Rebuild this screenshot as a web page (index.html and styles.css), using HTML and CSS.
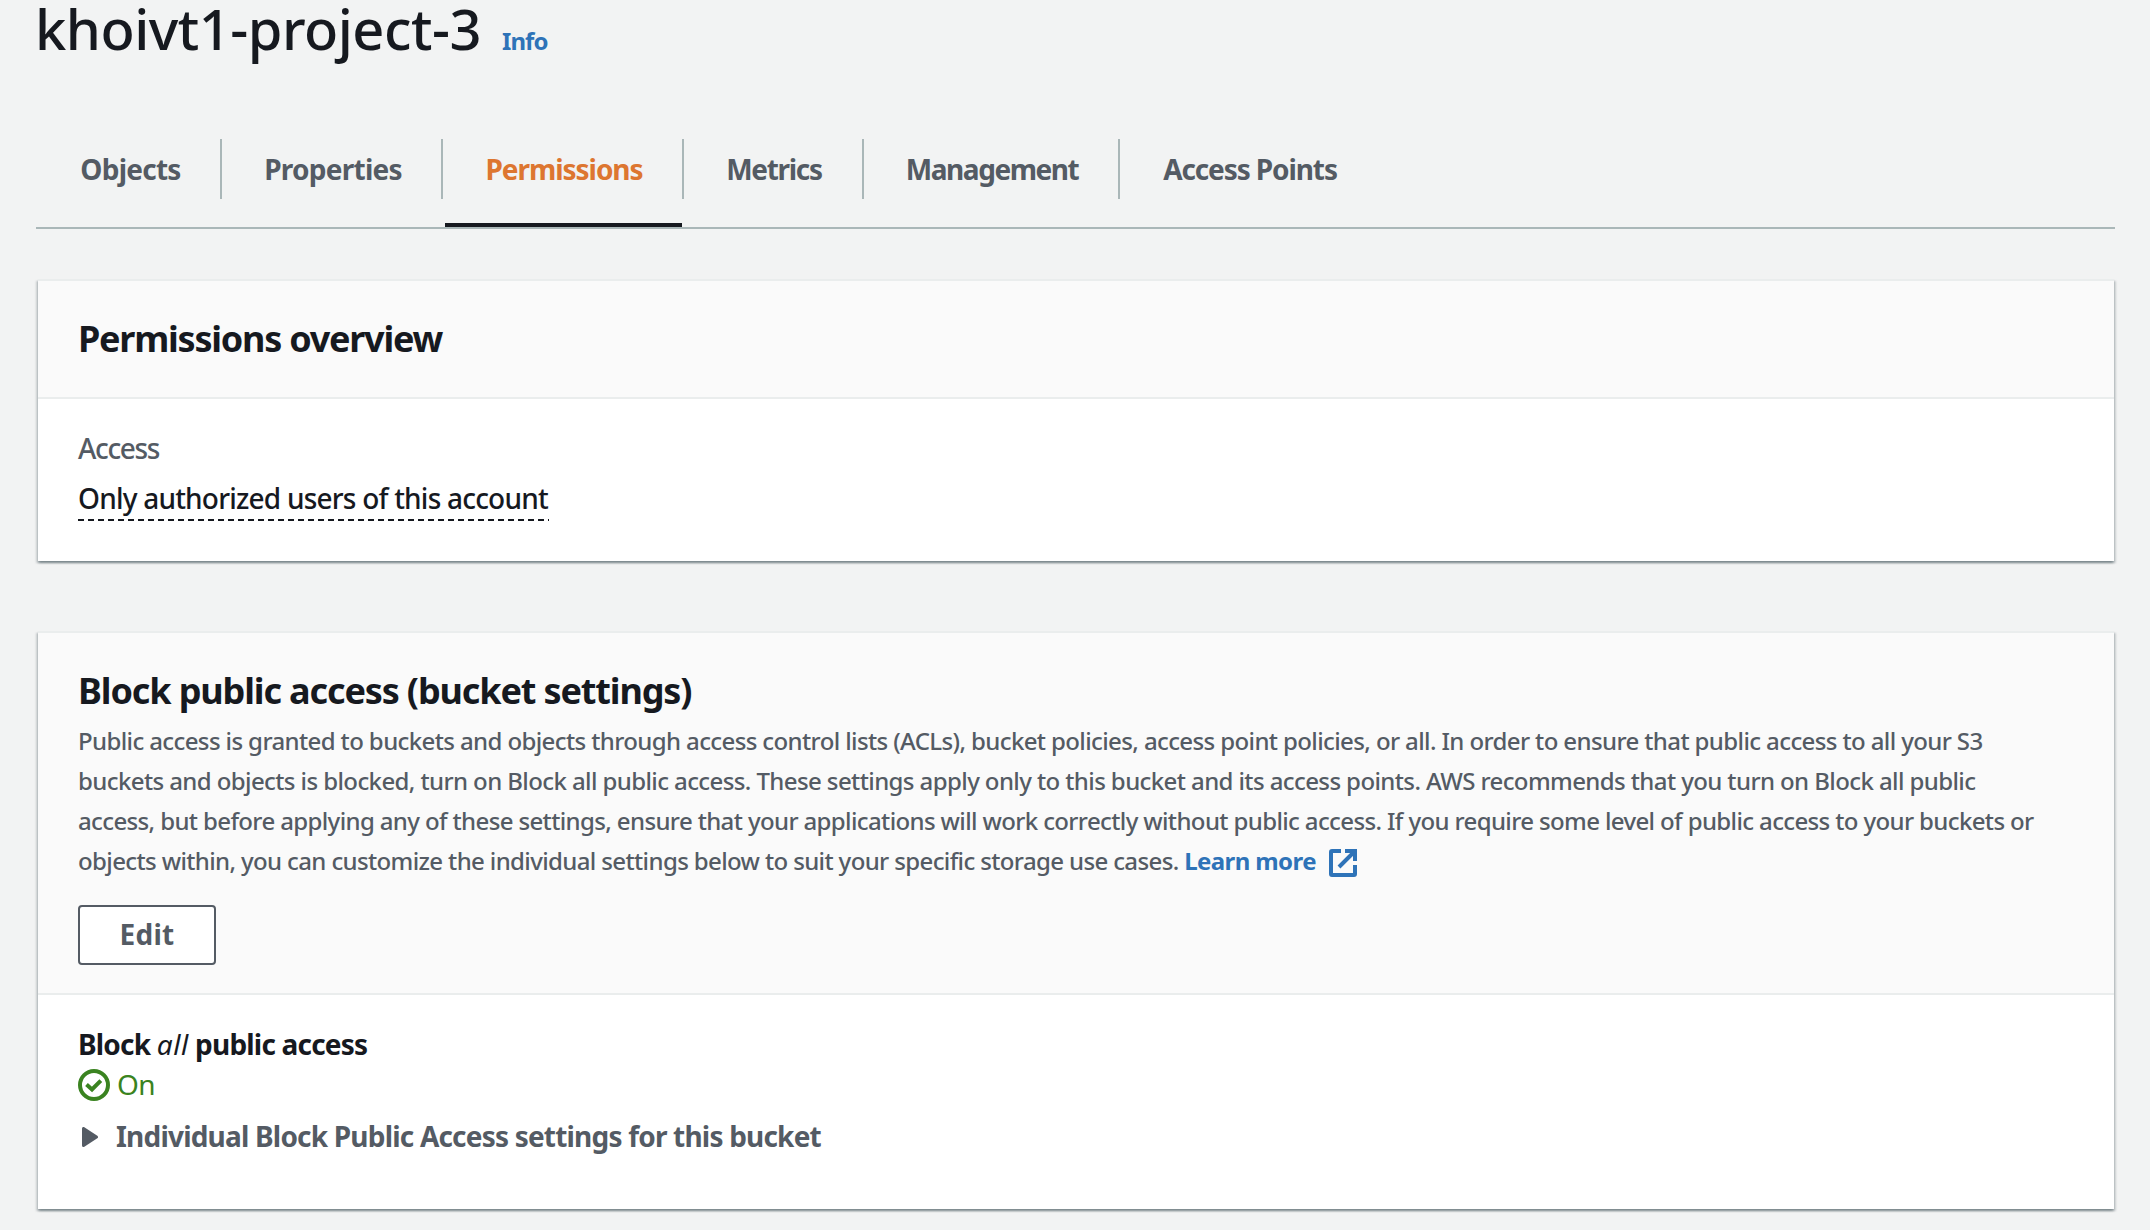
FILE: index.html
```
<!DOCTYPE html>
<html lang="en">
<head>
<meta charset="utf-8">
<title>khoivt1-project-3</title>
<link rel="stylesheet" href="styles.css">
</head>
<body>
<header class="page-header">
  <h1 class="page-title">khoivt1-project-3</h1>
  <a class="info-link">Info</a>
</header>
<nav class="tabs">
  <a class="tab tab-objects"><span>Objects</span></a>
  <a class="tab tab-properties"><span>Properties</span></a>
  <a class="tab tab-permissions active"><span>Permissions</span></a>
  <a class="tab tab-metrics"><span>Metrics</span></a>
  <a class="tab tab-management"><span>Management</span></a>
  <a class="tab tab-points"><span>Access Points</span></a>
</nav>
<main class="content">
  <section class="card">
    <div class="card-header">
      <h2 class="card-title overview-title">Permissions overview</h2>
    </div>
    <div class="card-body overview-body">
      <div class="label">Access</div>
      <div class="access-value">Only authorized users of this account</div>
    </div>
  </section>
  <section class="card">
    <div class="card-header settings-header">
      <h2 class="card-title">Block public access (bucket settings)</h2>
      <p class="description">
        <span class="l1">Public access is granted to buckets and objects through access control lists (ACLs), bucket policies, access point policies, or all. In order to ensure that public access to all your S3</span><br>
        <span class="l2">buckets and objects is blocked, turn on Block all public access. These settings apply only to this bucket and its access points. AWS recommends that you turn on Block all public</span><br>
        <span class="l3">access, but before applying any of these settings, ensure that your applications will work correctly without public access. If you require some level of public access to your buckets or</span><br>
        <span class="l4">objects within, you can customize the individual settings below to suit your specific storage use cases.</span>
        <a class="learn-more">Learn more<svg class="external" viewBox="0 0 28 28"><path d="M12 2H3Q2 2 2 3v22q0 1 1 1h22q1 0 1-1v-9M16 2h10v10M25.500 2.500 10 18"/></svg></a>
      </p>
      <button class="edit-button">Edit</button>
    </div>
    <div class="card-body settings-body">
      <div class="setting-name">Block <em>all</em> public access</div>
      <div class="status"><svg class="status-icon" viewBox="0 0 32 32"><circle cx="16" cy="16" r="14"/><path d="M8.500 15.500 14 20.500 22.800 11.700"/></svg><span>On</span></div>
      <div class="expander"><svg class="caret" viewBox="0 0 16 20"><path d="M1.500 1.500v17L14.500 10z"/></svg><span>Individual Block Public Access settings for this bucket</span></div>
    </div>
  </section>
</main>
</body>
</html>
```
FILE: styles.css
```
* { box-sizing: border-box; }
body {
  margin: 0;
  height: 1230px;
  overflow: hidden;
  background: #f2f3f3;
  color: #16191f;
  font: 400 28px/40px "Noto Sans", "Open Sans", sans-serif;
}
.page-header {
  display: flex;
  align-items: baseline;
  gap: 21px;
  height: 139px;
  padding-left: 35px;
}
.page-title {
  margin: 0;
  font-size: 56px;
  line-height: 56px;
  font-weight: 500;
  letter-spacing: -0.5px;
}
.info-link {
  color: #2e73b8;
  font-size: 24px;
  font-weight: 700;
  letter-spacing: -0.9px;
}
.tabs {
  display: flex;
  height: 90px;
  margin: 0 35px 0 36px;
  padding-left: 2px;
  border-bottom: 2px solid #aab7b8;
}
.tab {
  display: flex;
  justify-content: center;
  height: 60px;
  padding-left: 3px;
  border-right: 2px solid #aab7b8;
  color: #545b64;
  font-weight: 700;
  line-height: 60px;
}
.tab-objects { width: 184px; letter-spacing: -0.75px; }
.tab-properties { width: 221px; letter-spacing: -0.75px; }
.tab-permissions { width: 241px; letter-spacing: -1.05px; }
.tab-metrics { width: 180px; padding-left: 2px; letter-spacing: -1.3px; }
.tab-management { width: 256px; padding-left: 2px; letter-spacing: -1.45px; }
.tab-points { width: 257px; letter-spacing: -1.1px; border-right: 0; }
.tab.active { position: relative; color: #dd7630; }
.tab.active::after {
  content: "";
  position: absolute;
  left: 2px;
  right: 0;
  top: 84px;
  height: 4px;
  background: #16191f;
}
.content {
  display: flex;
  flex-direction: column;
  gap: 70px;
  padding: 50px 36px 0 38px;
}
.card {
  border-top: 2px solid #eaeded;
  background: #fff;
  box-shadow: 0 2px 2px rgba(0, 28, 36, .3), 2px 2px 2px rgba(0, 28, 36, .15), -2px 2px 2px rgba(0, 28, 36, .15);
}
.card-header {
  padding: 36px 40px 36px;
  border-bottom: 2px solid #eaeded;
  background: #fafafa;
}
.settings-header { padding-bottom: 28px; }
.card-title {
  margin: 0;
  font-size: 36px;
  line-height: 44px;
  font-weight: 700;
  letter-spacing: -1.13px;
}
.overview-title { letter-spacing: -1.24px; }
.overview-body { padding: 29px 40px 40px; font-weight: 500; }
.label { margin-bottom: 10px; color: #545b64; letter-spacing: -1.35px; }
.access-value {
  width: 471px;
  height: 43px;
  white-space: nowrap;
  letter-spacing: -0.79px;
  background: repeating-linear-gradient(90deg, #16191f 0 6px, transparent 6px 10px) 0 41px / 100% 2px no-repeat;
}
.description {
  margin: 8px 0 24px;
  color: #545b64;
  font-size: 24px;
  font-weight: 500;
  white-space: nowrap;
  letter-spacing: -0.63px;
}
.l1 { letter-spacing: -0.615px; }
.l2 { letter-spacing: -0.6px; }
.learn-more {
  color: #2e73b8;
  font-weight: 700;
  letter-spacing: -0.6px;
}
.external {
  width: 28px;
  height: 28px;
  margin-left: 13px;
  vertical-align: -7px;
  fill: none;
  stroke: currentColor;
  stroke-width: 4;
}
.edit-button {
  display: block;
  width: 138px;
  height: 60px;
  padding: 0 0 1px;
  border: 2px solid #545b64;
  border-radius: 4px;
  background: #fff;
  color: #545b64;
  font: 700 28px/55px "Noto Sans", sans-serif;
  letter-spacing: 0.3px;
}
.settings-body { padding: 29px 40px 53px; }
.setting-name { font-weight: 700; letter-spacing: -0.8px; }
.setting-name em { font-weight: 400; letter-spacing: 0.5px; }
.status {
  display: flex;
  align-items: center;
  gap: 7px;
  height: 40px;
  color: #3a8320;
  letter-spacing: -0.6px;
}
.status-icon {
  width: 32px;
  height: 32px;
  margin-top: 2px;
  fill: none;
  stroke: currentColor;
  stroke-width: 4;
}
.expander {
  display: flex;
  align-items: center;
  gap: 18px;
  height: 40px;
  margin-top: 12px;
  padding-left: 4px;
  color: #545b64;
  font-weight: 700;
  letter-spacing: -0.8px;
}
.caret {
  width: 16px;
  height: 20px;
  margin-top: 2px;
  fill: currentColor;
  stroke: currentColor;
  stroke-width: 3;
  stroke-linejoin: round;
}
```
